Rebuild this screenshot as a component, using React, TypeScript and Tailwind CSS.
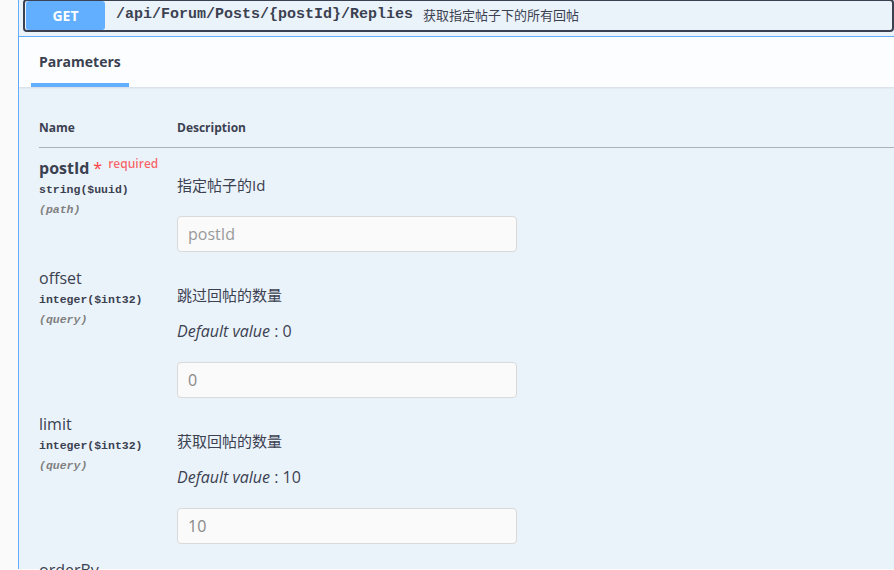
import React from 'react';

const sans = "font-['Open_Sans','Noto_Sans_CJK_SC',sans-serif]";
const mono = "font-['Liberation_Mono','Noto_Sans_CJK_SC',monospace]";

type Param = {
  name: string;
  required?: boolean;
  type: string;
  location: string;
  description: string;
  defaultValue?: string;
  value?: string;
  placeholder?: string;
};

const params: Param[] = [
  {
    name: 'postId',
    required: true,
    type: 'string($uuid)',
    location: '(path)',
    description: '指定帖子的Id',
    placeholder: 'postId',
  },
  {
    name: 'offset',
    type: 'integer($int32)',
    location: '(query)',
    description: '跳过回帖的数量',
    defaultValue: '0',
    value: '0',
  },
  {
    name: 'limit',
    type: 'integer($int32)',
    location: '(query)',
    description: '获取回帖的数量',
    defaultValue: '10',
    value: '10',
  },
  {
    name: 'orderBy',
    type: 'string',
    location: '(query)',
    description: '排序方式',
  },
];

function ParamRow({ p, first }: { p: Param; first?: boolean }) {
  return (
    <div className={`flex pb-[7px] ${first ? 'pt-[10px]' : 'pt-[9px]'}`}>
      <div className="w-[138px] shrink-0">
        <div className="flex items-start leading-[20px]">
          <span
            className={`text-[16px] text-[#3b4151] ${p.required ? 'font-bold' : 'font-normal'}`}
          >
            {p.name}
          </span>
          {p.required && (
            <>
              <span className="ml-[4px] text-[16px] text-[#f93e3e]">*</span>
              <span className="relative top-[-4px] ml-[6px] text-[12px] font-semibold text-[rgba(255,0,0,0.6)]">
                required
              </span>
            </>
          )}
        </div>
        <div className={`${mono} mt-[2px] text-[11.5px] font-bold leading-[20px] text-[#3b4151]`}>
          {p.type}
        </div>
        <div className={`${mono} text-[11.5px] font-bold italic leading-[20px] text-[#808080]`}>
          {p.location}
        </div>
      </div>
      <div className="flex-1">
        <p className="mt-[17px] text-[15px] leading-[20px] text-[#3b4151]">
          {p.description}
        </p>
        {p.defaultValue !== undefined && (
          <p className="mt-[16px] text-[16px] leading-[20px] text-[#3b4151]">
            <i>Default value</i> : {p.defaultValue}
          </p>
        )}
        <input
          readOnly
          value={p.value ?? ''}
          placeholder={p.placeholder}
          className="mt-[21px] h-[36px] w-[340px] rounded-[4px] border border-[#d9d9d9] bg-[#fafafa] px-[10px] text-[16px] text-[#888] placeholder:text-[#999] outline-none"
        />
      </div>
    </div>
  );
}

export default function App() {
  return (
    <div className={`${sans} h-[570px] overflow-hidden bg-[#fafafa] pl-[18px]`}>
      <div className="h-full border-l border-[#61affe] bg-[#ebf3fa]">
        <div className="border-b border-[#61affe] pb-[4px] pl-[4px]">
          <div className="-mt-[1px] flex h-[33px] items-center rounded-[4px] border-2 border-[#3b4151]">
            <span className="ml-[1px] flex h-full w-[79px] items-center justify-center rounded-[3px] bg-[#61affe] text-[14px] font-bold text-white">
              GET
            </span>
            <span className={`${mono} ml-[11px] text-[15px] font-bold text-[#3b4151]`}>
              /api/Forum/Posts/{'{postId}'}/Replies
            </span>
            <span className="ml-[10px] text-[13px] text-[#3b4151]">
              获取指定帖子下的所有回帖
            </span>
          </div>
        </div>

        <div className="flex h-[50px] items-end bg-[rgba(255,255,255,0.8)] pl-[12px] shadow-[0_1px_2px_rgba(0,0,0,0.1)]">
          <div className="flex h-full flex-col justify-end">
            <span className="px-[8px] pb-[11px] text-[14px] font-bold text-[#3b4151]">
              Parameters
            </span>
            <div className="h-[4px] bg-[#61affe]" />
          </div>
        </div>

        <div className="pl-[20px] pt-[21px]">
          <div className="flex border-b border-[#adb2ba] py-[12px] text-[12px] font-bold leading-[15px] text-[#3b4151]">
            <div className="w-[138px]">Name</div>
            <div>Description</div>
          </div>
          {params.map((p, i) => (
            <ParamRow key={p.name} p={p} first={i === 0} />
          ))}
        </div>
      </div>
    </div>
  );
}
